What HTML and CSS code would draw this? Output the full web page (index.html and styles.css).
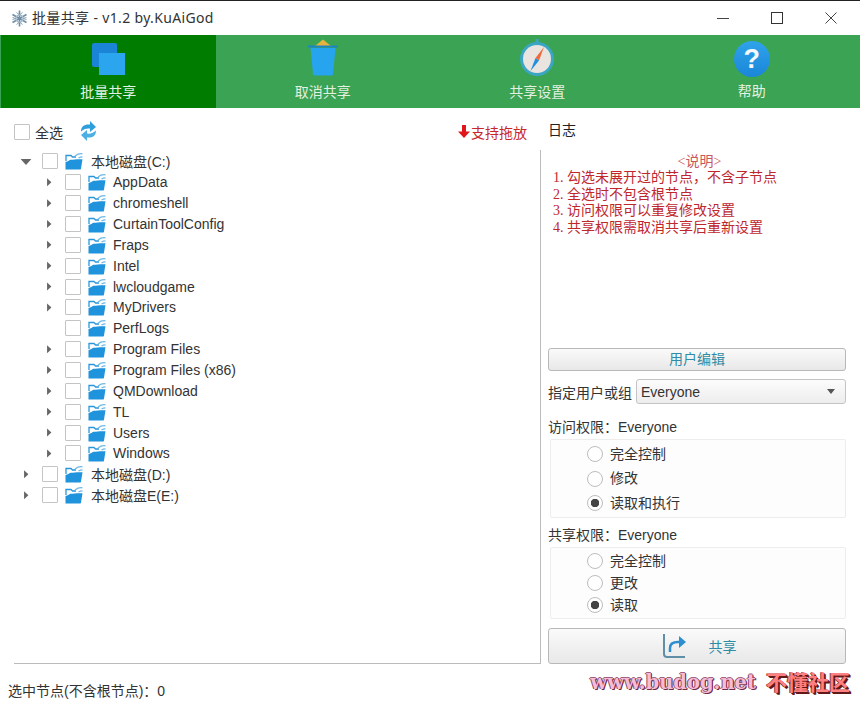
FILE: index.html
```html
<!DOCTYPE html>
<html lang="zh-CN">
<head>
    <meta charset="UTF-8">
    <meta name="viewport" content="width=device-width, initial-scale=1.0">
    <title>批量共享</title>
    <link rel="stylesheet" href="styles.css">
</head>
<body>
    <svg class="defs" width="0" height="0" aria-hidden="true">
        <symbol id="folder" viewBox="0 0 18 18">
            <path d="M1 9V3.500h5l1.500 1.500h3.500" fill="none" stroke="#2a97dc" stroke-width="1.300"/>
            <path d="M10 4c2.500-2 5-2.600 7.500-2.200M13.500 6c1.200-.8 2.500-1.200 4-1.200" fill="none" stroke="#6db8e6" stroke-width="1.200"/>
            <path d="M.5 17.500V10c2.500-.2 3.500-1.800 5-2.200 3.500-.6 8-.8 12-.6l-1.500 9.300c0 .7-.5 1-1 1z" fill="#1f93dc"/>
        </symbol>
    </svg>

    <div class="window">
        <header class="titlebar">
            <svg class="app-icon" width="17" height="17" viewBox="0 0 17 17">
                <g fill="none" stroke="#6d8ca6">
                    <path d="M8.500 .5v16M1.500 4.500l14 8M15.500 4.500l-14 8" stroke-width="1.600"/>
                    <circle cx="8.500" cy="8.500" r="3.500" stroke="#a9bccb" stroke-width="1.500"/>
                    <path d="M5.500 2.500l3 2.500 3-2.500M5.500 14.500l3-2.500 3 2.500M1.500 7.500l3.500 1-3.500 1M15.500 7.500l-3.500 1 3.500 1" stroke="#8aa4b8"/>
                </g>
            </svg>
            <span class="app-title">批量共享 - v1.2 by.KuAiGod</span>
            <div class="win-btns">
                <svg width="12" height="12" viewBox="0 0 12 12"><path d="M0 6.500h12" stroke="#444"/></svg>
                <svg width="12" height="12" viewBox="0 0 12 12"><rect x=".5" y=".5" width="11" height="11" fill="none" stroke="#333"/></svg>
                <svg width="12" height="12" viewBox="0 0 12 12"><path d="M.5.5l11 11M11.500.5l-11 11" stroke="#444"/></svg>
            </div>
        </header>

        <nav class="tabs">
            <a class="tab active">
                <svg width="40" height="40" viewBox="0 0 40 40">
                    <rect x="4" y="5" width="25" height="24" rx="2" fill="#1b84d6"/>
                    <rect x="11" y="15" width="26" height="22" fill="#2ba6ee"/>
                </svg>
                <span>批量共享</span>
            </a>
            <a class="tab">
                <svg width="40" height="40" viewBox="0 0 40 40">
                    <path d="M12 8l8-6.500L28 8z" fill="#e6b23e"/>
                    <path d="M5 8.500h30" stroke="#1b84c6" stroke-width="2"/>
                    <path d="M7.500 10h25l-2.500 26c0 1-.8 1.500-1.500 1.500h-17c-.8 0-1.500-.5-1.500-1.500z" fill="#27a4ee"/>
                </svg>
                <span>取消共享</span>
            </a>
            <a class="tab">
                <svg width="40" height="40" viewBox="0 0 40 40">
                    <circle cx="20" cy="21" r="17" fill="#3ba6c4"/>
                    <rect x="18.500" y="1" width="3" height="4" fill="#3ba6c4"/>
                    <circle cx="20" cy="21" r="14" fill="#e9e4df"/>
                    <path d="M27 9l-8.500 11 3.500 2.500z" fill="#ee6a3a"/>
                    <path d="M13.500 33l5-13 3.500 2.500z" fill="#1f8fe0"/>
                </svg>
                <span>共享设置</span>
            </a>
            <a class="tab">
                <span class="help-icon">?</span>
                <span>帮助</span>
            </a>
        </nav>

        <main class="main">
            <section class="left">
                <div class="toolbar">
                    <label class="check-all"><input type="checkbox"> 全选</label>
                    <svg class="refresh" width="17" height="20" viewBox="0 0 17 20">
                        <path d="M1 10.500C1 5 4.500 3 10 3.500V0l6 6-6 5V7.500C6.500 7 3.500 8 1 10.500z" fill="#2f9fdc"/>
                        <path d="M16 9.500c0 5.500-3.500 7.500-9 7V20l-6-6 6-5v3.500c3.500.5 6.500-.5 9-3z" fill="#4cb0e4"/>
                    </svg>
                    <span class="drag-tip">
                        <svg width="12" height="13" viewBox="0 0 12 13"><path d="M4 0h4v6.500h4L6 13 0 6.500h4z" fill="#e0161b"/></svg>
                        支持拖放
                    </span>
                </div>
                <div class="tree">
                    <div class="node"><i class="arrow open"></i><input type="checkbox"><svg class="folder"><use href="#folder"/></svg>本地磁盘(C:)</div>
                    <div class="node child"><i class="arrow"></i><input type="checkbox"><svg class="folder"><use href="#folder"/></svg>AppData</div>
                    <div class="node child"><i class="arrow"></i><input type="checkbox"><svg class="folder"><use href="#folder"/></svg>chromeshell</div>
                    <div class="node child"><i class="arrow"></i><input type="checkbox"><svg class="folder"><use href="#folder"/></svg>CurtainToolConfig</div>
                    <div class="node child"><i class="arrow"></i><input type="checkbox"><svg class="folder"><use href="#folder"/></svg>Fraps</div>
                    <div class="node child"><i class="arrow"></i><input type="checkbox"><svg class="folder"><use href="#folder"/></svg>Intel</div>
                    <div class="node child"><i class="arrow"></i><input type="checkbox"><svg class="folder"><use href="#folder"/></svg>lwcloudgame</div>
                    <div class="node child"><i class="arrow"></i><input type="checkbox"><svg class="folder"><use href="#folder"/></svg>MyDrivers</div>
                    <div class="node child"><i class="arrow none"></i><input type="checkbox"><svg class="folder"><use href="#folder"/></svg>PerfLogs</div>
                    <div class="node child"><i class="arrow"></i><input type="checkbox"><svg class="folder"><use href="#folder"/></svg>Program Files</div>
                    <div class="node child"><i class="arrow"></i><input type="checkbox"><svg class="folder"><use href="#folder"/></svg>Program Files (x86)</div>
                    <div class="node child"><i class="arrow"></i><input type="checkbox"><svg class="folder"><use href="#folder"/></svg>QMDownload</div>
                    <div class="node child"><i class="arrow"></i><input type="checkbox"><svg class="folder"><use href="#folder"/></svg>TL</div>
                    <div class="node child"><i class="arrow"></i><input type="checkbox"><svg class="folder"><use href="#folder"/></svg>Users</div>
                    <div class="node child"><i class="arrow"></i><input type="checkbox"><svg class="folder"><use href="#folder"/></svg>Windows</div>
                    <div class="node"><i class="arrow"></i><input type="checkbox"><svg class="folder"><use href="#folder"/></svg>本地磁盘(D:)</div>
                    <div class="node"><i class="arrow"></i><input type="checkbox"><svg class="folder"><use href="#folder"/></svg>本地磁盘E(E:)</div>
                </div>
            </section>

            <aside class="right">
                <div class="log-title">日志</div>
                <div class="notes">
                    <p class="notes-head">&lt;说明&gt;</p>
                    <p>1. 勾选未展开过的节点，不含子节点</p>
                    <p>2. 全选时不包含根节点</p>
                    <p>3. 访问权限可以重复修改设置</p>
                    <p>4. 共享权限需取消共享后重新设置</p>
                </div>
                <button class="btn user-btn">用户编辑</button>
                <div class="user-row">
                    <span>指定用户或组</span>
                    <div class="select">Everyone<i class="select-arrow"></i></div>
                </div>
                <div class="perm-label">访问权限：Everyone</div>
                <div class="perm-group wide">
                    <label><input type="radio" name="access"> 完全控制</label>
                    <label><input type="radio" name="access"> 修改</label>
                    <label><input type="radio" name="access" checked> 读取和执行</label>
                </div>
                <div class="perm-label">共享权限：Everyone</div>
                <div class="perm-group">
                    <label><input type="radio" name="share"> 完全控制</label>
                    <label><input type="radio" name="share"> 更改</label>
                    <label><input type="radio" name="share" checked> 读取</label>
                </div>
                <button class="btn share-btn">
                    <svg width="26" height="26" viewBox="0 0 26 26">
                        <path d="M2 1v20c0 2 1 3 3 3h18" fill="none" stroke="#5f8ea6" stroke-width="2"/>
                        <path d="M8 19v-4c0-4 3-6 8-6h2" fill="none" stroke="#2d8fd0" stroke-width="2.500"/>
                        <path d="M17 3l7 6-7 6z" fill="#2d8fd0"/>
                    </svg>
                    <span>共享</span>
                </button>
            </aside>
        </main>

        <footer class="status">选中节点(不含根节点)：0</footer>
        <div class="watermark"><span class="wm-url">www.budog.net</span><span class="wm-name">不懂社区</span></div>
    </div>
</body>
</html>
```

FILE: styles.css
```css
* {
    box-sizing: border-box;
}
body {
    margin: 0;
    font-family: "Liberation Sans", "Noto Sans CJK SC", sans-serif;
    font-size: 14px;
    color: #333;
    background: #fff;
}
p {
    margin: 0;
}
.defs {
    position: absolute;
}
.window {
    position: relative;
    display: flex;
    flex-direction: column;
    width: 860px;
    height: 704px;
    border-top: 1px solid #222;
    overflow: hidden;
}

/* title bar */
.titlebar {
    display: flex;
    align-items: center;
    height: 34px;
    padding-left: 11px;
    flex-shrink: 0;
}
.app-title {
    margin-left: 4px;
    white-space: nowrap;
    line-height: 34px;
    font-family: "Noto Sans", "Noto Sans CJK SC", sans-serif;
    letter-spacing: .35px;
}
.win-btns {
    display: flex;
    gap: 42px;
    margin-left: auto;
    margin-right: 23px;
}

/* tabs */
.tabs {
    display: grid;
    grid-template-columns: repeat(4, 1fr);
    height: 73px;
    padding: 0 1px;
    flex-shrink: 0;
    background: #3aa354;
}
.tab {
    display: flex;
    flex-direction: column;
    align-items: center;
    padding-top: 3px;
    color: #e2f1e2;
    line-height: 20px;
}
.tab svg,
.help-icon {
    margin-bottom: 4px;
}
.tab.active {
    background: #007c00;
}
.help-icon {
    width: 36px;
    height: 36px;
    margin-top: 3px;
    margin-bottom: 5px;
    border-radius: 50%;
    background: linear-gradient(#2fa3ea, #1a86d8);
    color: #f4f8ff;
    font: bold 27px/36px "Liberation Sans", sans-serif;
    text-align: center;
}
.help-icon + span {
    margin-top: -1px;
}

/* main */
.main {
    display: flex;
    height: 556px;
    flex-shrink: 0;
}
.left {
    width: 541px;
    flex-shrink: 0;
}
.toolbar {
    display: flex;
    align-items: center;
    height: 42px;
    padding: 5px 14px 0 14px;
}
.check-all {
    display: flex;
    align-items: center;
    gap: 5px;
}
.refresh {
    margin-left: 17px;
    margin-top: -2px;
}
.drag-tip {
    display: flex;
    align-items: center;
    gap: 1px;
    margin-left: auto;
    color: #c8262b;
}
input[type="checkbox"] {
    appearance: none;
    width: 16px;
    height: 16px;
    margin: 0;
    flex-shrink: 0;
    border: 1px solid #c4c4c4;
    border-radius: 1px;
    background: #fff;
}

/* tree */
.tree {
    height: 514px;
    margin-left: 14px;
    padding-top: 1px;
    border-right: 1px solid #bbb;
    border-bottom: 1px solid #bbb;
}
.node {
    display: flex;
    align-items: center;
    height: 20.87px;
    padding-left: 6px;
    white-space: nowrap;
}
.node.child {
    padding-left: 29px;
}
.node.child .folder {
    margin-right: 7px;
}
.arrow {
    width: 12px;
    height: 10px;
    margin-right: 10px;
    flex-shrink: 0;
    background: #666;
    clip-path: polygon(34% 10%, 70% 50%, 34% 90%);
}
.arrow.open {
    clip-path: polygon(5% 25%, 95% 25%, 50% 85%);
}
.arrow.none {
    background: transparent;
}
.folder {
    width: 18px;
    height: 18px;
    margin: 0 8px 0 7px;
    flex-shrink: 0;
}

/* right side */
.right {
    flex: 1;
    padding: 0 14px 0 7px;
    min-width: 0;
}
.log-title {
    height: 42px;
    padding-top: 4px;
    line-height: 37px;
    color: #222;
}
.notes {
    height: 198px;
    padding: 4px 0 0 5px;
    font-family: "Liberation Serif", "Noto Sans CJK SC", serif;
    color: #c0272d;
    line-height: 16.4px;
}
.notes-head {
    text-align: center;
    color: #c9565a;
}
.btn {
    display: flex;
    align-items: center;
    justify-content: center;
    width: 298px;
    border: 1px solid #b8b8b8;
    border-radius: 3px;
    background: linear-gradient(#fafafa, #e8e8e8);
    color: #2e8ca6;
    font: inherit;
}
.user-btn {
    height: 23px;
    padding: 0 0 3px;
}
.user-row {
    display: flex;
    align-items: center;
    justify-content: space-between;
    height: 25px;
    margin-top: 8px;
}
.select {
    display: flex;
    align-items: center;
    justify-content: space-between;
    width: 210px;
    height: 25px;
    padding: 0 10px 0 4px;
    border: 1px solid #c4c4c4;
    border-radius: 3px;
    background: linear-gradient(#fcfcfc, #ededed);
}
.select-arrow {
    width: 0;
    height: 0;
    border-left: 4px solid transparent;
    border-right: 4px solid transparent;
    border-top: 5px solid #555;
}
.perm-label {
    height: 17px;
    margin-top: 15px;
    line-height: 17px;
}
.perm-group {
    display: flex;
    flex-direction: column;
    justify-content: center;
    height: 72px;
    margin: 3px 0 0 2px;
    padding-left: 36px;
    border: 1px solid #ededed;
    border-radius: 2px;
    background: #fdfdfd;
    line-height: 22px;
}
.perm-group.wide {
    height: 79px;
    margin-top: 3px;
    line-height: 24.500px;
}
.perm-group.wide + .perm-label {
    margin-top: 9px;
}
.perm-group label {
    display: flex;
    align-items: center;
    gap: 7px;
}
input[type="radio"] {
    appearance: none;
    display: block;
    width: 16px;
    height: 16px;
    margin: 0;
    border: 1px solid #bdbdbd;
    border-radius: 50%;
    background: #fff;
}
input[type="radio"]:checked {
    background: radial-gradient(circle, #444 0 4px, #fff 4.500px);
}
.share-btn {
    gap: 21px;
    height: 36px;
    margin-top: 9px;
    padding: 0 0 0 4px;
}

/* status + overlay */
.status {
    padding: 18px 0 0 8px;
    line-height: 18px;
}
.watermark {
    position: absolute;
    right: 10px;
    bottom: 10px;
    display: flex;
    align-items: center;
    gap: 10px;
    white-space: nowrap;
    font-weight: bold;
    line-height: 22px;
}
.wm-url {
    font: bold 19.5px/22px "DejaVu Serif", serif;
    color: #f6bcd6;
    text-shadow: 1px 1px 0 #6e2c4c, -1px 0 0 #8a4a68, 0 -1px 0 #a06080, 1px 0 0 #6e2c4c;
}
.wm-name {
    font-size: 21px;
    color: #ff8080;
    text-shadow: 1px 1px 0 #601818, 2px 2px 0 #601818, -1px 0 0 #a04040;
}
```
